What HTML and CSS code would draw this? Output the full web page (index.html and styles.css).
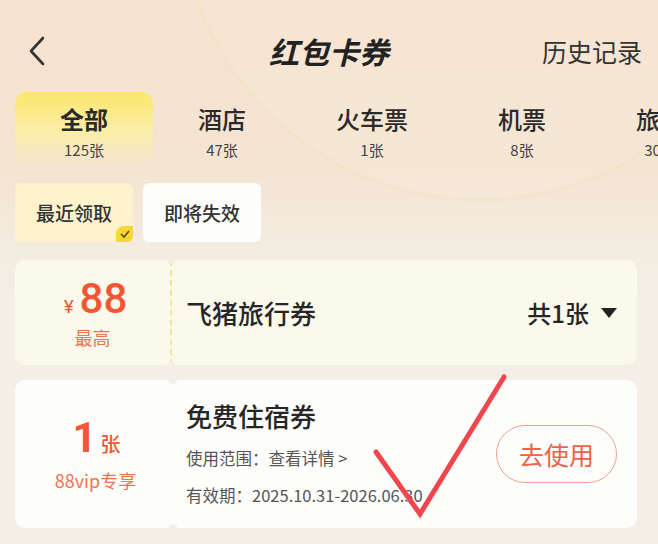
FILE: index.html
```html
<!DOCTYPE html>
<html lang="zh-CN">
<head>
  <meta charset="UTF-8" />
  <meta name="viewport" content="width=device-width, initial-scale=1.0" />
  <title>红包卡券</title>
  <link rel="stylesheet" href="styles.css">
</head>
<body>
  <header class="topbar">
    <div class="back">
      <svg width="22" height="32" viewBox="0 0 22 32"><path d="M17 3 L5 16 L17 29" fill="none" stroke="#333" stroke-width="2.6" stroke-linecap="round" stroke-linejoin="round"/></svg>
    </div>
    <h1>红包卡券</h1>
    <div class="history">历史记录</div>
  </header>

  <nav class="tabs">
    <div class="tab active"><span class="tab-name">全部</span><span class="tab-count">125张</span></div>
    <div class="tab"><span class="tab-name">酒店</span><span class="tab-count">47张</span></div>
    <div class="tab"><span class="tab-name">火车票</span><span class="tab-count">1张</span></div>
    <div class="tab"><span class="tab-name">机票</span><span class="tab-count">8张</span></div>
    <div class="tab"><span class="tab-name">旅游</span><span class="tab-count">30张</span></div>
  </nav>

  <div class="chips">
    <div class="chip selected">最近领取<span class="chip-check">
      <svg width="10" height="8" viewBox="0 0 10 8"><path d="M1 4 L4 7 L9 1" fill="none" stroke="#5a4a10" stroke-width="1.6"/></svg>
    </span></div>
    <div class="chip">即将失效</div>
  </div>

  <section class="coupon group">
    <div class="coupon-left">
      <div class="amount"><span class="yen">¥</span>88</div>
      <div class="amount-sub">最高</div>
    </div>
    <div class="coupon-right">
      <div class="coupon-title">飞猪旅行券</div>
      <div class="coupon-total">共1张 <span class="caret"></span></div>
    </div>
  </section>

  <section class="coupon item">
    <div class="coupon-left">
      <div class="amount"><span class="big-one">1</span><span class="unit">张</span></div>
      <div class="amount-sub">88vip专享</div>
    </div>
    <div class="coupon-right">
      <div class="coupon-info">
        <div class="coupon-title">免费住宿券</div>
        <div class="coupon-meta">使用范围：查看详情 &gt;</div>
        <div class="coupon-meta">有效期：2025.10.31-2026.06.30</div>
      </div>
      <button class="use-btn">去使用</button>
    </div>
  </section>

  <svg class="tick" width="658" height="544" viewBox="0 0 658 544">
    <path d="M376 452 L420 514 L504 377" fill="none" stroke="#f2464c" stroke-width="5" stroke-linecap="round" stroke-linejoin="miter"/>
  </svg>
</body>
</html>
```

FILE: styles.css
```css
* {
  box-sizing: border-box;
}
body {
  margin: 0;
  width: 658px;
  height: 544px;
  overflow: hidden;
  position: relative;
  font-family: "Noto Sans CJK SC", "Noto Sans", sans-serif;
  color: #222;
  background:
    radial-gradient(circle at 480px -100px, transparent 0, transparent 298px, rgba(240, 228, 190, 0.45) 299px, rgba(240, 228, 190, 0.45) 301px, transparent 302px),
    radial-gradient(circle at 480px -100px, rgba(250, 238, 222, 0.22) 0, rgba(250, 238, 222, 0.22) 298px, transparent 299px),
    linear-gradient(180deg, #f5e2cf 0px, #f4e4d2 170px, #f3ebdf 240px, #f3efe6 300px);
}
.topbar {
  display: flex;
  align-items: center;
  justify-content: space-between;
  height: 62px;
  margin-top: 20px;
  padding: 0 16px 0 26px;
}
.back {
  width: 100px;
  display: flex;
  align-items: center;
}
.topbar h1 {
  margin: 0;
  font-size: 30px;
  font-weight: 700;
  font-style: italic;
  color: #222;
}
.history {
  width: 110px;
  text-align: right;
  font-size: 25px;
  color: #333;
}
.tabs {
  display: flex;
  margin: 10px 0 0 15px;
  white-space: nowrap;
}
.tab {
  display: flex;
  flex-direction: column;
  align-items: center;
  flex-shrink: 0;
  padding: 10px 45px 8px;
  height: 74px;
  border-radius: 12px 12px 0 0;
}
.tab.active {
  background: linear-gradient(180deg, #fbe66a 0%, #fbeeaa 55%, rgba(250, 240, 200, 0) 100%);
}
.tab-name {
  font-size: 24px;
  line-height: 34px;
  font-weight: 500;
  color: #2a2a2a;
}
.tab.active .tab-name {
  font-weight: 700;
}
.tab-count {
  margin-top: 4px;
  font-size: 15px;
  line-height: 20px;
  color: #444;
}
.chips {
  display: flex;
  gap: 10px;
  margin: 17px 0 0 15px;
}
.chip {
  position: relative;
  width: 118px;
  height: 59px;
  border-radius: 6px;
  background: #fdfdfb;
  display: flex;
  align-items: center;
  justify-content: center;
  font-size: 19px;
  font-weight: 500;
  color: #333;
}
.chip.selected {
  background: #fcf3cc;
}
.chip-check {
  position: absolute;
  right: 0;
  bottom: 0;
  width: 17px;
  height: 16px;
  background: #f6d835;
  border-radius: 8px 0 6px 0;
  display: flex;
  align-items: center;
  justify-content: center;
}
.coupon {
  display: flex;
  margin: 0 21px 0 15px;
}
.coupon.group {
  margin-top: 18px;
  height: 105px;
}
.coupon.item {
  margin-top: 15px;
  height: 148px;
}
.coupon-left {
  position: relative;
  width: 157px;
  display: flex;
  flex-direction: column;
  align-items: center;
  justify-content: center;
  border-radius: 10px 0 0 10px;
  color: #f0603c;
}
.coupon-right {
  flex: 1;
  display: flex;
  align-items: center;
  justify-content: space-between;
  border-radius: 0 10px 10px 0;
  padding: 0 20px 0 14px;
}
.group .coupon-left,
.group .coupon-right {
  background: #fbf8ec;
}
.item .coupon-left,
.item .coupon-right {
  background: #fdfdfc;
}
.group .coupon-left {
  border-right: 2px dashed #f4e690;
}
.coupon-left::before,
.coupon-left::after {
  content: "";
  position: absolute;
  right: -5px;
  width: 8px;
  height: 8px;
  border-radius: 50%;
  background: #f3efe6;
}
.coupon-left::before {
  top: -4px;
}
.coupon-left::after {
  bottom: -4px;
}
.group .coupon-left::before {
  background: #f3ede2;
}
.amount {
  display: flex;
  align-items: baseline;
  line-height: 44px;
  font-family: "Roboto", "Noto Sans", sans-serif;
  font-size: 42px;
  font-weight: 500;
  color: #f25632;
  margin-left: 6px;
}
.yen {
  font-size: 19px;
  margin-right: 6px;
  font-weight: 400;
}
.group .amount-sub {
  margin-top: -4px;
}
.amount-sub {
  font-size: 18px;
  line-height: 24px;
  color: #ef7452;
}
.item .amount-sub {
  margin-top: 2px;
  margin-left: 4px;
}
.big-one {
  font-size: 42px;
  font-weight: 700;
}
.unit {
  font-family: "Noto Sans CJK SC", sans-serif;
  font-size: 20px;
  margin-left: 4px;
}
.coupon-title {
  font-size: 26px;
  font-weight: 500;
  color: #262626;
}
.coupon-total {
  display: flex;
  align-items: center;
  font-size: 24px;
  font-weight: 500;
  color: #262626;
}
.caret {
  display: inline-block;
  margin-left: 12px;
  border-left: 8px solid transparent;
  border-right: 8px solid transparent;
  border-top: 10px solid #222;
}
.coupon-info {
  display: flex;
  flex-direction: column;
  padding-top: 2px;
}
.coupon-info .coupon-title {
  line-height: 40px;
  margin-bottom: 4px;
}
.coupon-meta {
  font-size: 16.5px;
  line-height: 37px;
  color: #555;
}
.use-btn {
  width: 121px;
  height: 58px;
  border: 1.5px solid #eea18e;
  border-radius: 29px;
  background: transparent;
  font-family: "Noto Sans CJK SC", sans-serif;
  font-size: 25px;
  color: #ec6345;
  padding: 0;
}
.tick {
  position: absolute;
  top: 0;
  left: 0;
  pointer-events: none;
}
```
